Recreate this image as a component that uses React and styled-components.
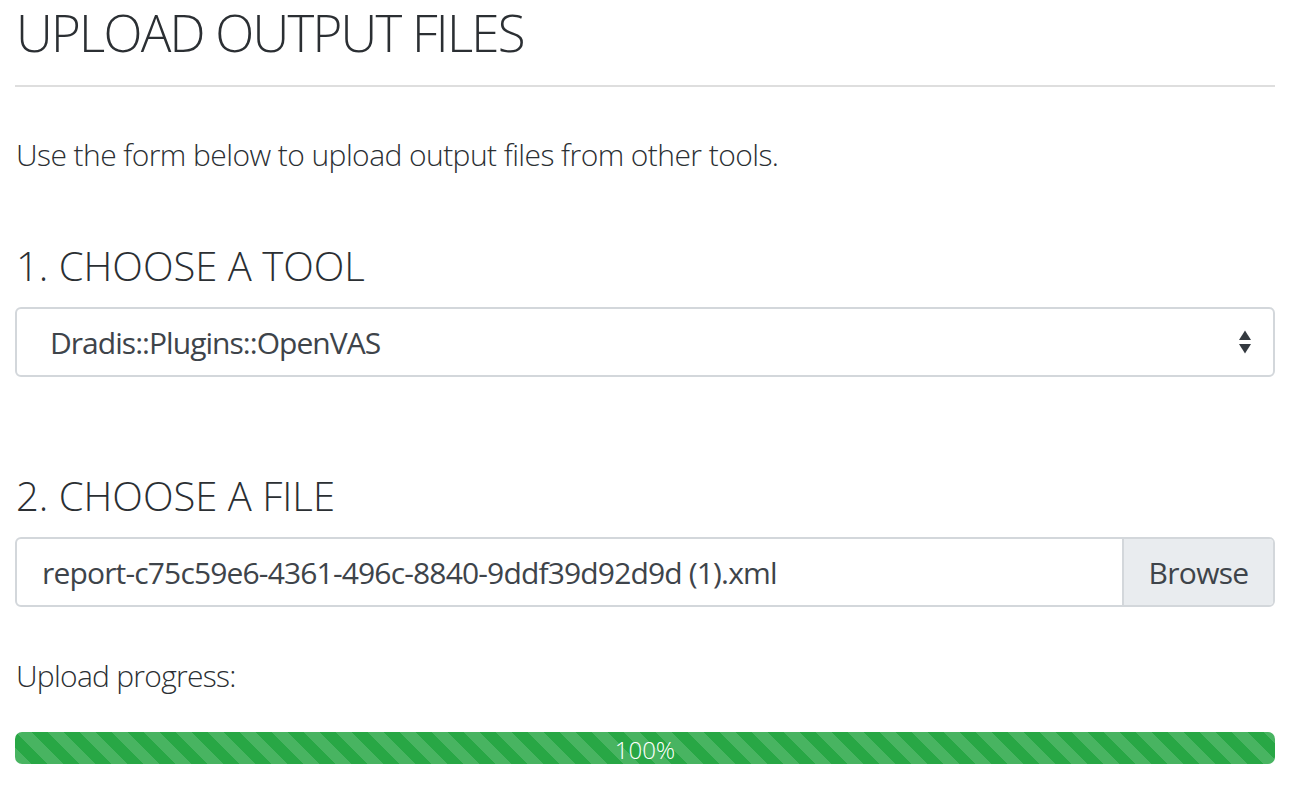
import React from "react";
import styled, { createGlobalStyle } from "styled-components";

const Global = createGlobalStyle`
  html, body { margin: 0; padding: 0; background: #fff; }
  body { font-family: "Open Sans", "Liberation Sans", sans-serif; color: #2b2f33; }
  * { box-sizing: border-box; }
`;

const Page = styled.div`
  width: 1290px;
  padding: 0 15px;
  display: flex;
  flex-direction: column;
`;

const Title = styled.h1`
  margin: 0;
  font-size: 51px;
  line-height: 64px;
  font-weight: 300;
  padding-left: 1px;
  letter-spacing: -1.75px;
  white-space: nowrap;
`;

const Rule = styled.hr`
  margin: 21px 0 0;
  border: 0;
  border-top: 2px solid #dedede;
  width: 1260px;
`;

const Text = styled.p`
  margin: ${(p) => p.$top}px 0 0;
  font-size: 30px;
  line-height: 40px;
  font-weight: 300;
  padding-left: 1px;
  letter-spacing: ${(p) => p.$ls}px;
  white-space: nowrap;
`;

const Heading = styled.h2`
  margin: ${(p) => p.$top}px 0 0;
  font-size: 40px;
  line-height: 48px;
  font-weight: 300;
  padding-left: 1px;
  white-space: nowrap;
`;

const Field = styled.div`
  margin-top: 17px;
  width: 1260px;
  height: 70px;
  border: 2px solid #d3d7db;
  border-radius: 6px;
  display: flex;
  align-items: stretch;
  overflow: hidden;
  font-size: 30px;
  color: #3e444a;
`;

const SelectValue = styled.div`
  flex: 1;
  display: flex;
  align-items: center;
  justify-content: space-between;
  padding: 0 22px 0 33px;
  letter-spacing: -0.96px;
`;

const Arrows = styled.svg`
  width: 12px;
  height: 24px;
  fill: #343a40;
`;

const FileName = styled.div`
  flex: 1;
  display: flex;
  align-items: center;
  padding-left: 25px;
  white-space: nowrap;
  letter-spacing: -0.84px;
`;

const Browse = styled.div`
  width: 151px;
  background: #e9ecef;
  border-left: 2px solid #d3d7db;
  display: flex;
  align-items: center;
  justify-content: center;
  letter-spacing: -0.7px;
`;

const Progress = styled.div`
  margin-top: 36px;
  width: 1260px;
  height: 32px;
  border-radius: 7px;
  background-color: #28a745;
  background-image: linear-gradient(
    45deg,
    rgba(255, 255, 255, 0.15) 25%,
    transparent 25%,
    transparent 50%,
    rgba(255, 255, 255, 0.15) 50%,
    rgba(255, 255, 255, 0.15) 75%,
    transparent 75%,
    transparent
  );
  background-size: 32px 32px;
  display: flex;
  align-items: center;
  justify-content: center;
  color: #fff;
  font-size: 24px;
  font-weight: 300;
  line-height: 32px;
  padding-top: 4px;
`;

export default function App() {
  return (
    <>
      <Global />
      <Page>
        <Title>UPLOAD OUTPUT FILES</Title>
        <Rule />
        <Text $top={48} $ls={-0.57}>
          Use the form below to upload output files from other tools.
        </Text>
        <Heading $top={67}>1. CHOOSE A TOOL</Heading>
        <Field>
          <SelectValue>
            <span>Dradis::Plugins::OpenVAS</span>
            <Arrows viewBox="0 0 12 24">
              <path d="M6 0.5 L12 10 H0 Z" />
              <path d="M6 23.5 L12 14 H0 Z" />
            </Arrows>
          </SelectValue>
        </Field>
        <Heading $top={95}>2. CHOOSE A FILE</Heading>
        <Field>
          <FileName>report-c75c59e6-4361-496c-8840-9ddf39d92d9d (1).xml</FileName>
          <Browse>Browse</Browse>
        </Field>
        <Text $top={49} $ls={-0.73}>
          Upload progress:
        </Text>
        <Progress>100%</Progress>
      </Page>
    </>
  );
}
